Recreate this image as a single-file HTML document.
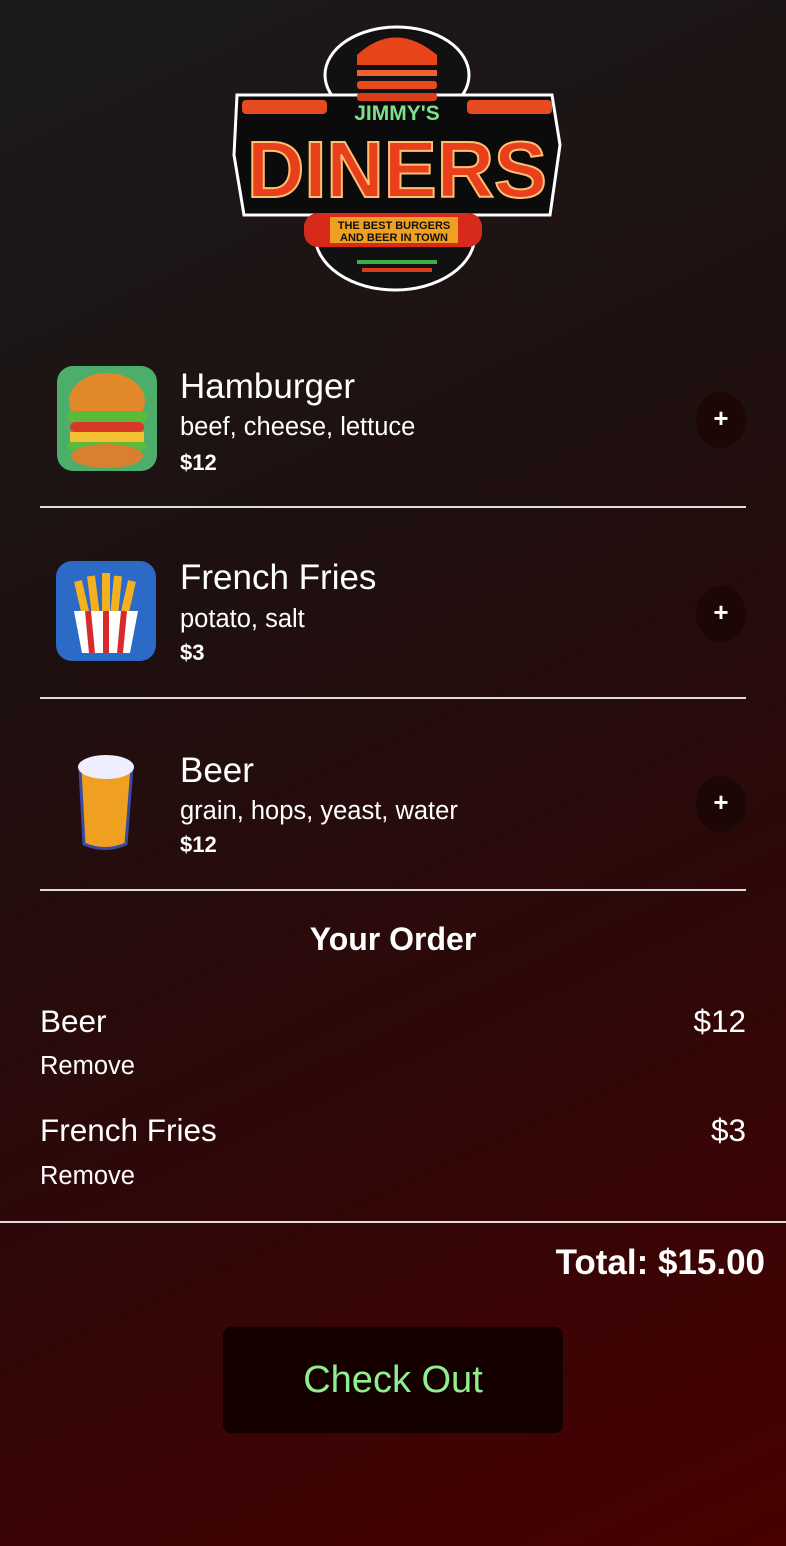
<!DOCTYPE html>
<html><head><meta charset="utf-8">
<style>
*{margin:0;padding:0;box-sizing:border-box}
html,body{width:786px;height:1546px;overflow:hidden}
body{background:linear-gradient(155deg,#1b1b1b 0%,#1e1010 35%,#2e0808 65%,#480000 100%);font-family:"Liberation Sans",Arial,sans-serif;color:#fff;position:relative}
.abs{position:absolute}
.row{position:absolute;left:40px;width:706px;height:192px;border-bottom:2px solid #ddd}
.row .img{position:absolute;left:12px;top:5px;width:105px;height:105px}
.row .t{position:absolute;left:140px;font-size:35px;line-height:40px}
.row .d{position:absolute;left:140px;font-size:25.5px;line-height:29px}
.row .p{position:absolute;left:140px;font-size:22px;font-weight:bold}
.plus{position:absolute;right:0;width:50px;height:56px;border-radius:50%;background:#1c0606;font-size:26px;font-weight:bold;text-align:center;line-height:52px}
</style></head><body>
<svg class="abs" style="left:232px;top:25px" width="330" height="268" viewBox="0 0 330 268">
<ellipse cx="165" cy="50" rx="72" ry="48" fill="#111" stroke="#fff" stroke-width="3"/>
<ellipse cx="163" cy="210" rx="80" ry="55" fill="#111" stroke="#fff" stroke-width="3"/>
<path d="M5 70 H320 L328 120 L318 190 H12 L2 130Z" fill="#0b0b0b" stroke="#fff" stroke-width="3"/>
<path d="M125 30 Q163 -5 205 30 V40 H125Z" fill="#e8461a"/>
<rect x="125" y="45" width="80" height="6" fill="#f06030"/>
<rect x="125" y="56" width="80" height="8" rx="3" fill="#e84a1f"/>
<rect x="125" y="68" width="80" height="8" rx="3" fill="#d83c18"/>
<rect x="10" y="75" width="85" height="14" rx="4" fill="#e84a1f"/>
<rect x="235" y="75" width="85" height="14" rx="4" fill="#e84a1f"/>
<text x="165" y="95" text-anchor="middle" font-family="Liberation Sans" font-weight="bold" font-size="21" fill="#7fe08a">JIMMY'S</text>
<text x="165" y="172" text-anchor="middle" font-family="Liberation Sans" font-weight="bold" font-size="80" fill="#e8401c" stroke="#ffc070" stroke-width="2" textLength="300" lengthAdjust="spacingAndGlyphs">DINERS</text>
<rect x="72" y="188" width="178" height="34" rx="14" fill="#d82a1a"/>
<rect x="98" y="192" width="128" height="26" fill="#f0a020"/>
<text x="162" y="204" text-anchor="middle" font-family="Liberation Sans" font-weight="bold" font-size="11" fill="#111">THE BEST BURGERS</text>
<text x="162" y="216" text-anchor="middle" font-family="Liberation Sans" font-weight="bold" font-size="11" fill="#111">AND BEER IN TOWN</text>
<rect x="125" y="235" width="80" height="4" fill="#3ab04a"/>
<rect x="130" y="243" width="70" height="4" fill="#d83c18"/>
</svg>

<div class="row" style="top:316px">
<svg class="img" style="top:50px" viewBox="0 0 105 105"><rect x="5" y="0" width="100" height="105" rx="16" fill="#4cae6a"/><ellipse cx="55" cy="35" rx="38" ry="28" fill="#e0882a"/><rect x="15" y="45" width="80" height="12" rx="6" fill="#5cba3a"/><rect x="18" y="56" width="74" height="10" rx="5" fill="#d83828"/><rect x="18" y="66" width="74" height="10" fill="#f2c030"/><rect x="15" y="76" width="80" height="8" rx="4" fill="#5cba3a"/><ellipse cx="55" cy="90" rx="36" ry="12" fill="#d88030"/></svg>
<div class="t" style="top:51px">Hamburger</div><div class="d" style="top:97px">beef, cheese, lettuce</div><div class="p" style="top:134px">$12</div>
<div class="plus" style="top:76px">+</div>
</div>
<div class="row" style="top:507px">
<svg class="img" style="left:16px;top:54px;width:100px;height:100px" viewBox="0 0 100 100"><rect width="100" height="100" rx="16" fill="#2c6ac8"/><path d="M22 20 L30 55 M35 15 L40 55 M50 12 L50 55 M62 15 L58 55 M76 20 L68 55" stroke="#f5b020" stroke-width="8"/><path d="M18 50 H82 L74 92 H26Z" fill="#fff"/><path d="M32 50 L36 92 M50 50 V92 M68 50 L64 92" stroke="#d82a2a" stroke-width="6"/></svg>
<div class="t" style="top:51px">French Fries</div><div class="d" style="top:98px">potato, salt</div><div class="p" style="top:133px">$3</div>
<div class="plus" style="top:79px">+</div>
</div>
<div class="row" style="top:699px">
<svg class="img" style="left:30px;top:50px;width:70px;height:105px" viewBox="0 0 70 105"><path d="M10 20 Q35 2 62 18 L56 95 Q35 104 14 95Z" fill="#f0a020" stroke="#3a4aa0" stroke-width="3"/><ellipse cx="36" cy="18" rx="28" ry="12" fill="#eef"/></svg>
<div class="t" style="top:52px">Beer</div><div class="d" style="top:98px">grain, hops, yeast, water</div><div class="p" style="top:133px">$12</div>
<div class="plus" style="top:77px">+</div>
</div>

<div class="abs" style="left:0;width:786px;top:921px;text-align:center;font-size:32px;font-weight:bold">Your Order</div>
<div class="abs" style="left:40px;top:1003px;font-size:31.5px">Beer</div>
<div class="abs" style="right:40px;top:1003px;font-size:31.5px">$12</div>
<div class="abs" style="left:40px;top:1052px;font-size:25.5px">Remove</div>
<div class="abs" style="left:40px;top:1112px;font-size:31.5px">French Fries</div>
<div class="abs" style="right:40px;top:1112px;font-size:31.5px">$3</div>
<div class="abs" style="left:40px;top:1162px;font-size:25.5px">Remove</div>
<div class="abs" style="left:0;top:1221px;width:786px;height:2px;background:#ddd"></div>
<div class="abs" style="right:21px;top:1243px;font-size:35px;font-weight:bold">Total: $15.00</div>
<div class="abs" style="left:223px;top:1327px;width:340px;height:106px;border-radius:8px;background:#150000;color:#8fef8f;font-size:38px;text-align:center;line-height:106px">Check Out</div>
</body></html>
